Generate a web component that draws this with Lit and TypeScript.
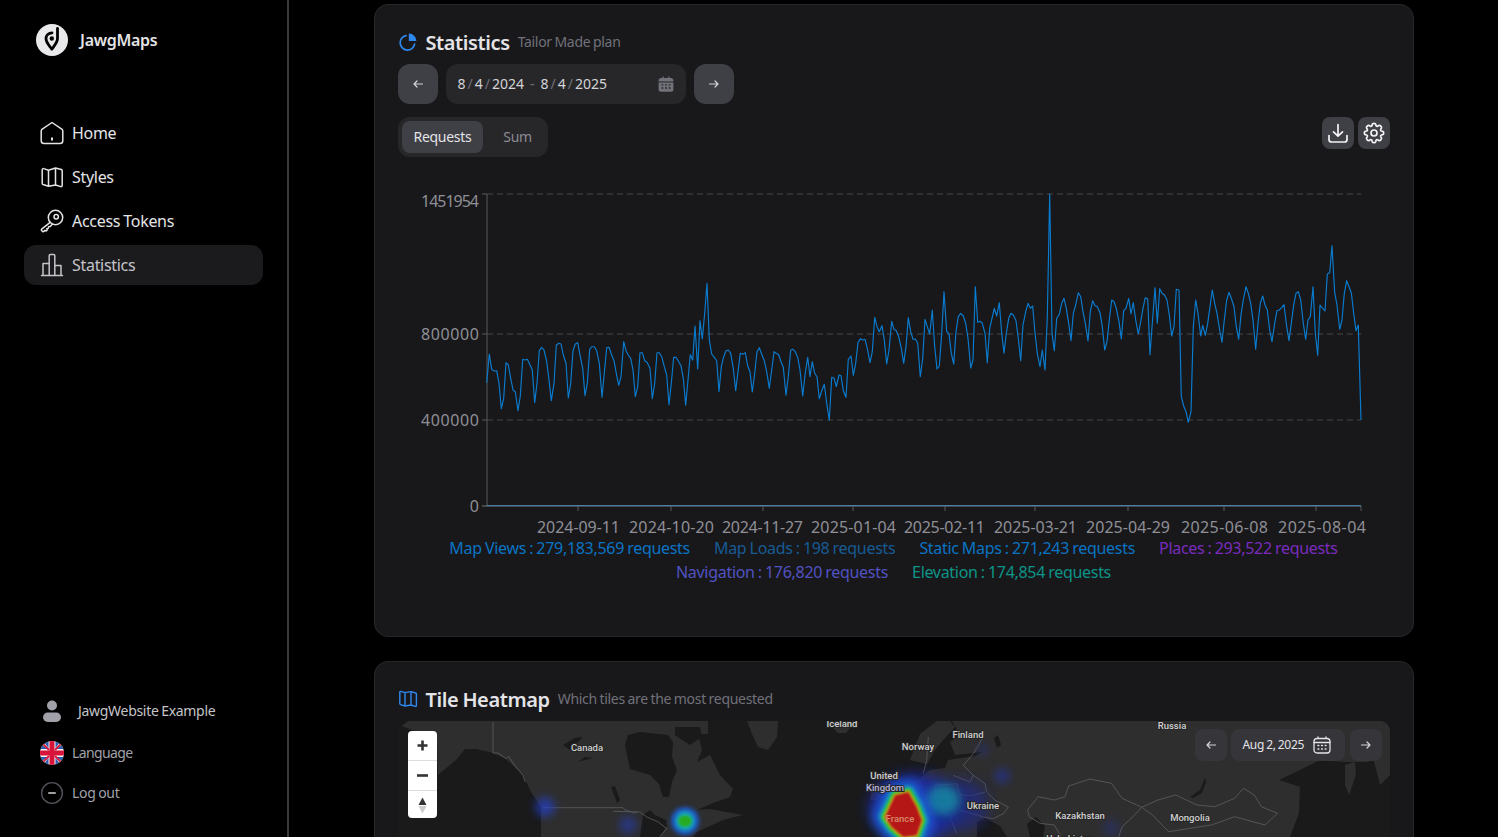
import { LitElement, html, svg, css } from "lit";
import { customElement } from "lit/decorators.js";

const z5: number[] = [20,368,28,282,35,328,42,333,50,332,57,370,64,446,71,415,78,308,85,314,92,355,99,390,106,395,114,452,121,408,128,298,135,300,142,298,150,314,157,330,164,428,171,370,178,272,185,262,192,270,200,305,207,360,214,422,222,370,229,256,236,250,243,252,250,285,258,310,265,414,272,370,279,272,286,252,293,248,300,285,308,325,315,407,322,370,329,268,336,260,343,260,350,272,358,310,366,412,373,340,380,263,387,262,394,282,402,302,409,340,416,376,423,350,431,245,438,272,445,285,452,295,459,330,466,410,473,380,480,278,487,278,494,302,501,307,510,325,517,416,524,370,531,278,538,278,545,290,553,320,560,345,567,434,574,370,581,292,588,292,595,303,603,317,610,355,617,436,624,360,631,284,638,300,645,198,653,327,660,182,667,237,674,160,681,70,688,240,695,282,703,292,710,303,717,395,724,320,731,290,738,272,745,270,752,280,760,325,767,392,774,335,781,280,788,283,796,278,803,318,810,335,817,396,824,340,831,275,838,263,845,283,853,302,860,335,868,385,875,330,882,275,889,280,896,284,903,305,910,322,918,406,925,350,932,270,939,268,946,275,953,292,960,330,968,408,975,345,983,292,990,350,997,305,1004,340,1011,350,1018,416,1026,390,1033,373,1040,430,1048,480,1055,352,1062,354,1069,380,1077,345,1083,347,1090,392,1098,412,1105,298,1113,288,1120,346,1127,310,1134,248,1141,236,1148,240,1155,238,1162,265,1170,308,1177,275,1184,172,1191,200,1198,215,1206,197,1213,240,1220,312,1227,270,1235,184,1242,208,1249,212,1256,230,1264,265,1271,310,1278,260,1285,173,1292,215,1299,238,1306,237,1313,250,1321,350,1328,295,1335,178,1342,200,1349,222,1357,150,1364,260,1371,327];
const z6: number[] = [28,528,35,430,42,305,50,425,57,432,64,490,71,522,78,425,85,380,92,370,100,378,107,400,114,445,122,534,129,510,136,290,143,397,150,394,157,400,165,430,172,518,179,415,186,385,193,355,200,378,208,338,215,430,222,490,229,430,236,385,243,370,250,375,258,392,265,445,272,512,279,405,287,365,294,340,301,355,308,348,315,430,322,490,330,530,337,480,345,540,352,380,359,12,366,430,373,482,380,385,388,373,395,340,402,325,409,355,416,400,423,452,430,370,437,345,445,308,452,320,459,365,466,400,474,453,481,365,488,332,495,347,502,350,510,368,517,410,524,480,531,455,538,390,545,330,552,335,559,355,567,395,574,447,581,362,588,355,596,325,603,372,610,338,617,390,625,432,632,395,639,355,646,323,653,326,660,494,667,400,675,293,682,400,689,296,696,310,704,316,711,330,718,375,725,438,732,410,739,298,747,300,754,620,761,648,768,665,775,697,783,665,790,410,797,330,804,370,812,438,818,406,826,436,833,400,840,350,847,300,854,340,861,370,869,420,876,457,883,390,890,330,897,307,904,325,912,350,919,410,926,448,933,375,940,330,948,290,955,310,962,340,969,390,977,478,984,400,991,340,998,318,1005,345,1012,360,1019,420,1026,455,1034,400,1041,362,1048,360,1055,353,1062,344,1070,410,1077,452,1084,400,1091,345,1098,310,1105,305,1112,330,1120,400,1127,448,1134,390,1141,380,1149,290,1156,430,1163,496,1170,345,1178,355,1185,363,1192,252,1199,248,1206,167,1214,308,1221,345,1229,418,1236,390,1243,310,1250,272,1257,290,1264,308,1271,370,1278,422,1285,405,1293,690];

const conv = (a: number[], x0: number, y0: number, fx = 3, fy = 3) => {
  const out: string[] = [];
  for (let i = 0; i < a.length; i += 2) out.push(`${(x0 + a[i] / fx).toFixed(1)},${(y0 + a[i + 1] / fy).toFixed(1)}`);
  return out.join(" ");
};
const linePts = conv(z5, 480, 260) + " " + conv(z6, 930, 190);

const Z8 = (a: number[]) => conv(a, 840, 700, 2.8, 3);
const Z10 = (a: number[]) => conv(a, 398, 717);
const Z11 = (a: number[]) => conv(a, 630, 717);
const Z12 = (a: number[]) => conv(a, 860, 717);

const ticks = [578, 671, 763, 853, 945, 1035, 1128, 1224, 1316, 1361];
const xLabels: [number, string, number][] = [[578.5, "2024-09-11", 83], [671.5, "2024-10-20", 85], [762.5, "2024-11-27", 81], [853.5, "2025-01-04", 85], [944.5, "2025-02-11", 81], [1035.5, "2025-03-21", 83], [1128, "2025-04-29", 84], [1224.5, "2025-06-08", 87], [1322, "2025-08-04", 88]];
const yLabels: [number, number, string, number][] = [[194, 201, "1451954", 58], [334, 334, "800000", 58], [420, 420, "400000", 58], [506, 506, "0", 9]];

const legend: [string, string][] = [
  ["Map Views : 279,183,569 requests", "l1"],
  ["Map Loads : 198 requests", "l2"],
  ["Static Maps : 271,243 requests", "l3"],
  ["Places : 293,522 requests", "l4"],
  ["Navigation : 176,820 requests", "l5"],
  ["Elevation : 174,854 requests", "l6"],
];

const mapLabels: [number, number, string, string][] = [
  [587, 751, "Canada", "ml"], [842, 727, "Iceland", "ml"], [918, 750, "Norway", "ml"], [968, 738, "Finland", "ml"],
  [884, 779, "United", "ml"], [885, 791, "Kingdom", "ml ml-h"], [900, 822, "France", "ml ml-f"], [983, 809, "Ukraine", "ml"],
  [1080, 819, "Kazakhstan", "ml"], [1172, 729, "Russia", "ml"], [1190, 821, "Mongolia", "ml"], [1070, 842, "Uzbekistan", "ml"],
];

const france = Z12([75,300,105,235,145,225,170,270,185,310,170,355,130,360,95,330]);

const arrowL = html`<svg class="ar" viewBox="0 0 12 12"><path d="M10.5 6H2M5 3 2 6l3 3" /></svg>`;
const arrowR = html`<svg class="ar" viewBox="0 0 12 12"><path d="M1.5 6H10M7 3l3 3-3 3" /></svg>`;

@customElement("app-root")
export class AppRoot extends LitElement {
  static styles = css`
    :host { display: flex; height: 837px; overflow: hidden; background: #000; font-family: "Noto Sans", sans-serif; color: #e4e4e7; letter-spacing: -0.3px; word-spacing: -0.7px; }
    * { box-sizing: border-box; }
    .t { margin-top: -2px; }
    .side { width: 289px; flex: none; height: 837px; border-right: 2px solid #3a3a3f; padding: 24px; display: flex; flex-direction: column; }
    .logo { display: flex; align-items: center; gap: 12px; padding-left: 12px; height: 32px; font-weight: 600; font-size: 16px; color: #e4e4e7; }
    .logo svg { width: 32px; height: 32px; }
    .nav { margin-top: 57px; display: flex; flex-direction: column; gap: 4px; flex: 1; }
    .item { height: 40px; display: flex; align-items: center; gap: 8px; padding-left: 16px; border-radius: 12px; font-size: 16px; color: #e4e4e7; }
    .item.on { background: #1b1b1e; color: #c4c4c9; }
    .item svg { width: 24px; height: 24px; fill: none; stroke: currentColor; stroke-width: 1.5; stroke-linecap: round; stroke-linejoin: round; flex: none; }
    .low { height: 40px; display: flex; align-items: center; padding-left: 16px; font-size: 14px; color: #a1a1aa; gap: 8px; }
    .low svg { width: 24px; height: 24px; flex: none; }
    .low.user { color: #c4c4c9; gap: 16px; padding-left: 19px; margin-bottom: 2px; }
    .low.user svg { width: 20px; height: 24px; margin-left: -1px; }
    .lang { letter-spacing: -0.6px; }
    .main { flex: 1; padding-top: 4px; display: flex; flex-direction: column; align-items: center; gap: 24px; min-width: 0; }
    .card { width: 1040px; flex: none; background: #18181b; border: 1px solid #27272a; border-radius: 14px; padding: 23px; }
    .c1 { height: 633px; }
    .c2 { height: 600px; }
    .title { height: 28px; display: flex; align-items: center; }
    .title svg { width: 20px; height: 20px; margin-right: 8px; flex: none; }
    .title b { font-size: 20px; font-weight: 600; color: #e4e4e7; margin-right: 8px; letter-spacing: -0.4px; }
    .title span { font-size: 14px; color: #71717a; }
    .title .t { margin-top: -1px; }
    .dates { display: flex; gap: 8px; margin-top: 8px; height: 40px; }
    .sq { width: 40px; height: 40px; border-radius: 12px; background: #3f3f46; display: flex; align-items: center; justify-content: center; }
    .ar { width: 12px; height: 12px; fill: none; stroke: #d4d4d8; stroke-width: 1.2; stroke-linecap: round; stroke-linejoin: round; }
    .range { width: 240px; height: 40px; border-radius: 12px; background: #27272a; display: flex; align-items: center; padding: 0 12px; font-size: 14px; color: #d4d4d8; letter-spacing: 0; }
    .range i { font-style: normal; color: #71717a; margin: 0 2px; }
    .range .dash { margin: 0 6px; }
    .range svg { width: 16px; height: 16px; margin-left: auto; fill: #71717a; }
    .bar { display: flex; justify-content: space-between; margin-top: 13px; }
    .tabs { display: flex; height: 40px; padding: 4px; border-radius: 12px; background: #27272a; font-size: 14px; color: #8b8b93; }
    .tab { height: 32px; display: flex; align-items: center; padding: 0 12px 2px; border-radius: 8px; }
    .tab.on { background: #3f3f46; color: #e4e4e7; }
    .tab.sum { padding: 0 12px 2px 20px; }
    .tools { display: flex; gap: 4px; }
    .tool { width: 32px; height: 32px; border-radius: 8px; background: #3f3f46; display: flex; align-items: center; justify-content: center; }
    .tool svg { width: 24px; height: 24px; fill: none; stroke: #f4f4f5; stroke-width: 1.7; stroke-linecap: round; stroke-linejoin: round; }
    .chart { display: block; width: 992px; height: 378px; margin-top: 4px; }
    .chart text { font-family: "Noto Sans", sans-serif; font-size: 16px; fill: #8f8f96; letter-spacing: 0; word-spacing: 0; }
    .grid { stroke: #47474a; stroke-width: 1; stroke-dasharray: 6 4; fill: none; }
    .axis { stroke: #58585c; stroke-width: 1; fill: none; }
    .series { fill: none; stroke: #0a7cd0; stroke-width: 1.15; stroke-linejoin: round; }
    .base { stroke: #4d7d9f; stroke-width: 1.2; }
    .legend { display: flex; flex-wrap: wrap; justify-content: center; column-gap: 24px; font-size: 16px; line-height: 24px; margin-top: -3px; }
    .l1 { color: #0a74c4; } .l2 { color: #175b94; } .l3 { color: #0a74c4; } .l4 { color: #7a2bbd; } .l5 { color: #5252c2; } .l6 { color: #0d9488; }
    .map { position: relative; margin-top: 8px; height: 400px; border-radius: 10px; overflow: hidden; background: #1a1a1b; }
    .map > svg.geo { display: block; width: 992px; height: 116px; }
    .land { fill: #2f2e2e; }
    .sea { fill: #1a1a1b; }
    .bd { fill: none; stroke: #5e5e5e; stroke-width: 0.8; stroke-linejoin: round; }
    .ml { font-family: Roboto, sans-serif; font-size: 9.5px; font-weight: 500; fill: #cfcfcf; stroke: #262626; stroke-width: 2px; paint-order: stroke; text-anchor: middle; letter-spacing: 0; word-spacing: 0; }
    .ml-h { fill: #b4b4dc; }
    .ml-f { fill: #d88a6a; stroke: none; }
    .zoom { position: absolute; left: 10px; top: 10px; width: 29px; height: 87px; background: #fff; border-radius: 4px; display: flex; flex-direction: column; }
    .zoom div { flex: 1; display: flex; align-items: center; justify-content: center; border-top: 1px solid #ddd; }
    .zoom div:first-child { border-top: none; }
    .zoom svg { width: 29px; height: 29px; }
    .mdate { position: absolute; right: 8px; top: 8px; display: flex; gap: 4px; height: 32px; }
    .mb { width: 32px; height: 32px; background: #35353a; border-radius: 8px; display: flex; align-items: center; justify-content: center; }
    .md { width: 114px; height: 32px; background: #35353a; border-radius: 8px; display: flex; align-items: center; padding-left: 12px; gap: 8px; font-size: 12px; color: #e4e4e7; }
    .md svg { width: 20px; height: 20px; fill: none; stroke: #e4e4e7; stroke-width: 1.3; stroke-linecap: round; stroke-linejoin: round; flex: none; }
    .md + .mb { margin-left: 1px; }
  `;

  chart() {
    return html`<svg class="chart" viewBox="398 161 992 378">
      ${[194, 334, 420].map((y) => svg`<line class="grid" x1="487" x2="1361" y1=${y} y2=${y}></line>`)}
      <line class="axis" x1="487" x2="487" y1="194" y2="506"></line>
      ${yLabels.map(([t, y, s, w]) => svg`<line class="axis" x1="482" x2="487" y1=${t} y2=${t}></line><text x="479" y=${y + 5.5} text-anchor="end" textLength=${w}>${s}</text>`)}
      <line class="axis" x1="482" x2="1361" y1="506" y2="506"></line>
      ${ticks.map((x) => svg`<line class="axis" x1=${x} x2=${x} y1="506" y2="511"></line>`)}
      ${xLabels.map(([x, s, w]) => svg`<text x=${x} y="533" text-anchor="middle" textLength=${w}>${s}</text>`)}
      <line class="base" x1="487" x2="1361" y1="505.6" y2="505.6"></line>
      <polyline class="series" points=${linePts}></polyline>
    </svg>`;
  }

  mapSvg() {
    return html`<svg class="geo" viewBox="398 721 992 116">
      <defs>
        <filter id="b1" x="-50%" y="-50%" width="200%" height="200%"><feGaussianBlur stdDeviation="1"></feGaussianBlur></filter>
        <filter id="b2" x="-50%" y="-50%" width="200%" height="200%"><feGaussianBlur stdDeviation="2.2"></feGaussianBlur></filter>
        <filter id="b4" x="-50%" y="-50%" width="200%" height="200%"><feGaussianBlur stdDeviation="4"></feGaussianBlur></filter>
        <filter id="b7" x="-50%" y="-50%" width="200%" height="200%"><feGaussianBlur stdDeviation="7"></feGaussianBlur></filter>
      </defs>
      <polygon class="land" points="402,726 408,721 708,721 708,734 698,734 702,750 697,762 710,755 720,775 733,789 730,797 713,803 697,810 710,809 743,815 723,820 697,832 693,837 541,837 541,807 531,792 523,775 506,759 493,753 476,749 465,749 456,760 438,775 437,740"></polygon>
      <polygon class="sea" points="625,745 630,769 650,775 659,784 663,797 669,797 672,782 677,770 672,757 673,742 668,735 640,732 628,735"></polygon>
      <polygon class="sea" points="675,727 700,727 702,737 690,745 675,735"></polygon>
      <polygon class="sea" points="563,745 575,738 583,737 576,744 570,750"></polygon>
      <polygon class="sea" points="578,762 585,757 593,758 585,760"></polygon>
      <polygon class="sea" points="611,787 615,786 620,800 617,803"></polygon>
      <polygon class="sea" points="643,815 650,810 655,815 666,820 667,826 660,837 640,837"></polygon>
      <polygon class="land" points="747,721 778,721 777,737 768,750 758,747 752,734"></polygon>
      <polygon class="land" points="833,728 850,728 846,733 838,733"></polygon>
      <polygon class="land" points="872,790 878,783 884,787 878,800 870,800"></polygon>
      <polygon class="land" points="937,721 920,734 910,760 927,764 935,750 945,738 955,727 950,721"></polygon>
      <polygon class="land" points="952,721 1390,721 1390,745 1368,762 1345,762 1320,760 1300,770 1279,780 1300,787 1299,813 1290,837 905,837 900,815 905,790 930,770 945,768 948,760 975,756 982,752 955,755 950,742 960,735"></polygon>
      <polygon class="land" points="1345,765 1355,762 1356,775 1349,795 1345,785"></polygon>
      <polygon class="land" points="1368,740 1390,725 1390,775 1380,785 1375,765"></polygon>
      <polygon class="sea" points="977,822 985,818 1000,826 1007,837 977,837"></polygon>
      <polygon class="sea" points="1027,824 1036,817 1045,826 1043,837 1030,837"></polygon>
      <polygon class="sea" points="1190,797 1200,790 1205,778 1206,782 1202,793 1193,798"></polygon>
      <polygon class="sea" points="994,738 998,735 1001,745 997,748"></polygon>
      <polyline class="bd" points=${Z10([285,15,285,108,300,108,325,125,332,118,350,145,375,175,382,195])}></polyline>
      <polyline class="bd" points=${Z10([435,272,675,272,680,278,710,288,718,285])}></polyline>
      <polyline class="bd" points=${Z11([-50,283,30,285,50,300,85,315,110,335,90,358])}></polyline>
      <polyline class="bd" points=${Z8([525,330,555,290,600,300,630,290,640,258,700,237,760,250,790,295,845,322,820,350,790,380,780,411])}></polyline>
      <polyline class="bd" points=${Z8([525,330,530,350,560,370,600,375,620,411])}></polyline>
      <polyline class="bd" points=${Z8([845,322,890,300,940,285,1000,315,1050,320,1105,295,1130,265,1160,285,1180,320,1225,340,1190,375,1105,350,1040,375,920,395,875,345,845,322])}></polyline>
      <polyline class="bd" points=${Z12([205,60,200,130,190,170])}></polyline>
      <polyline class="bd" points=${Z12([370,60,340,110,310,145,340,175,375,200,380,225,405,250,445,270,430,290,400,305,370,300,340,290,300,280,270,300])}></polyline>
      <polyline class="bd" points=${Z12([280,175,330,195,340,175])}></polyline>
      <polyline class="bd" points=${Z12([225,205,290,200,300,230,310,235,340,235,375,225])}></polyline>
      <polyline class="bd" points=${Z12([225,205,230,260,205,265,210,290,250,285,270,300,290,350])}></polyline>

      <g filter="url(#b7)" opacity="0.85">
        <ellipse cx="915" cy="808" rx="46" ry="34" fill="#1a2cb0"></ellipse>
        <ellipse cx="960" cy="805" rx="28" ry="26" fill="#1a2a9a" opacity="0.7"></ellipse>
      </g>
      <circle cx="983" cy="750" r="6" fill="#2030a0" opacity="0.4" filter="url(#b4)"></circle>
      <circle cx="1002" cy="776" r="8" fill="#2235a8" opacity="0.55" filter="url(#b4)"></circle>
      <circle cx="1111" cy="828" r="9" fill="#2235a8" opacity="0.3" filter="url(#b4)"></circle>
      <ellipse cx="943" cy="800" rx="17" ry="15" fill="#159aa4" opacity="0.7" filter="url(#b4)"></ellipse>
      <polygon points=${france} fill="#1c5cd8" stroke="#1c5cd8" stroke-width="26" stroke-linejoin="round" opacity="0.8" filter="url(#b4)"></polygon>
      <polygon points=${france} fill="#18b0b0" stroke="#18b0b0" stroke-width="12" stroke-linejoin="round" filter="url(#b2)"></polygon>
      <polygon points=${france} fill="#34c028" stroke="#34c028" stroke-width="7" stroke-linejoin="round" filter="url(#b1)"></polygon>
      <polygon points=${france} fill="#c8b820" stroke="#c8b820" stroke-width="3" stroke-linejoin="round" filter="url(#b1)"></polygon>
      <polygon points=${france} fill="#b51414" filter="url(#b1)"></polygon>

      <circle cx="545" cy="807" r="10" fill="#2340c8" opacity="0.7" filter="url(#b4)"></circle>
      <circle cx="628" cy="825" r="9" fill="#2340c8" opacity="0.5" filter="url(#b4)"></circle>
      <circle cx="685" cy="821" r="14" fill="#1c5cd8" opacity="0.9" filter="url(#b2)"></circle>
      <circle cx="685" cy="821" r="9.5" fill="#18b0b0" filter="url(#b2)"></circle>
      <ellipse cx="685" cy="821" rx="6.5" ry="5.5" fill="#26ac20" filter="url(#b1)"></ellipse>
      ${mapLabels.map(([x, y, s, c]) => svg`<text class=${c} x=${x} y=${y}>${s}</text>`)}
    </svg>`;
  }

  render() {
    return html`
      <aside class="side">
        <div class="logo">
          <svg viewBox="0 0 32 32"><circle cx="16" cy="16" r="16" fill="#e9e9eb"></circle><path d="M21.5 4.5V14.5C21.5 18.5 18 22 15.8 25.2 13.5 22 10 18.5 10 14.5 10 11.2 12.7 9 16 8.8" fill="none" stroke="#000" stroke-width="2.8" stroke-linecap="round" stroke-linejoin="round"></path><circle cx="15.8" cy="14.5" r="2.2" fill="#000"></circle></svg>
          <span>JawgMaps</span>
        </div>
        <nav class="nav">
          <div class="item">
            <svg viewBox="0 0 24 24"><path d="M12 1.5 21.8 8.2C22.4 8.6 22.8 9.3 22.8 10V19.8C22.8 21.4 21.6 22.6 20 22.6H4C2.4 22.6 1.2 21.4 1.2 19.8V10C1.2 9.3 1.6 8.6 2.2 8.2Z"></path><path d="M12 17.2V18.8" stroke-width="2"></path></svg>
            Home
          </div>
          <div class="item">
            <svg viewBox="0 0 24 24"><path d="M8.5 5.2 3.8 3.6C3 3.3 2.2 3.9 2.2 4.7V18.2C2.2 18.8 2.6 19.3 3.1 19.5L8.5 21.2 15.5 20 20.9 21.6C21.6 21.8 22.2 21.3 22.2 20.6V5.8C22.2 5.2 21.8 4.7 21.3 4.5L15.5 3ZM8.5 5.2V21.2M15.5 3V20"></path></svg>
            Styles
          </div>
          <div class="item">
            <svg viewBox="0 0 24 24"><circle cx="15.5" cy="8.5" r="7.2"></circle><circle cx="16.2" cy="7.8" r="2.2"></circle><path d="M10.2 13.4 1.6 20.2C1.2 20.6 1.2 21 1.5 21.5L2.6 22.4C3 22.8 3.5 22.7 3.9 22.4L5 21.3 6.2 22 7.2 21 6.8 19.7 8.2 19.4 8.6 17.8 10 17.6 12.4 15.2"></path></svg>
            Access Tokens
          </div>
          <div class="item on">
            <svg viewBox="0 0 24 24"><path d="M1.5 22.5H22.5M3 22.5V10.5H9.2M9.2 22.5V2.8C9.2 2.2 9.7 1.6 10.3 1.6H13.7C14.3 1.6 14.8 2.2 14.8 2.8V22.5M14.8 12.5H21V22.5"></path></svg>
            Statistics
          </div>
        </nav>
        <div class="low user">
          <svg viewBox="0 0 20 24"><circle cx="10" cy="6.5" r="5" fill="#a1a1aa"></circle><rect x="1" y="13.5" width="18" height="9.5" rx="4.7" fill="#a1a1aa"></rect></svg>
          <span class="t">JawgWebsite Example</span>
        </div>
        <div class="low">
          <svg viewBox="0 0 24 24">
            <defs><clipPath id="fl"><circle cx="12" cy="12" r="12"></circle></clipPath></defs>
            <g clip-path="url(#fl)">
              <rect width="24" height="24" fill="#f5f5f5"></rect>
              <path d="M0 3 8 8H0ZM3 0 8.5 7V0ZM15.5 0V7L21 0ZM24 3 16 8H24ZM0 21 8 16H0ZM3 24 8.5 17V24ZM15.5 24V17L21 24ZM24 21 16 16H24Z" fill="#2a5caa"></path>
              <path d="M0 0 9 9M24 0 15 9M0 24 9 15M24 24 15 15" stroke="#d8143a" stroke-width="1.8"></path>
              <path d="M12 0V24M0 12H24" stroke="#d8143a" stroke-width="5"></path>
            </g>
          </svg>
          <span class="t lang">Language</span>
        </div>
        <div class="low">
          <svg viewBox="0 0 24 24"><circle cx="12" cy="12" r="10.4" fill="none" stroke="#52525b" stroke-width="1.4"></circle><path d="M8.8 12H15.2" stroke="#d4d4d8" stroke-width="1.6" stroke-linecap="round"></path></svg>
          <span class="t">Log out</span>
        </div>
      </aside>
      <main class="main">
        <section class="card c1">
          <div class="title">
            <svg viewBox="0 0 20 20"><path d="M8 3.6A7.3 7.3 0 1 0 16.6 12.2" fill="none" stroke="#2f88ee" stroke-width="1.7" stroke-linecap="round"></path><path d="M10.8 1.4A7.6 7.6 0 0 1 18.4 9H10.8Z" fill="#2f88ee"></path></svg>
            <b>Statistics</b><span class="t">Tailor Made plan</span>
          </div>
          <div class="dates">
            <div class="sq">${arrowL}</div>
            <div class="range">
              <span class="t">8<i>/</i>4<i>/</i>2024<i class="dash">-</i>8<i>/</i>4<i>/</i>2025</span>
              <svg viewBox="0 0 16 16"><path d="M4.5 0.5H5.8V2H10.2V0.5H11.5V2H13C14.4 2 15.4 3 15.4 4.3V5.5H0.6V4.3C0.6 3 1.6 2 3 2H4.5ZM0.6 6.6H15.4V13.4C15.4 14.7 14.4 15.7 13 15.7H3C1.6 15.7 0.6 14.7 0.6 13.4ZM3.5 8.2V9.6H5.3V8.2ZM7.1 8.2V9.6H8.9V8.2ZM10.7 8.2V9.6H12.5V8.2ZM3.5 11.3V12.7H5.3V11.3ZM7.1 11.3V12.7H8.9V11.3ZM10.7 11.3V12.7H12.5V11.3Z" fill-rule="evenodd"></path></svg>
            </div>
            <div class="sq">${arrowR}</div>
          </div>
          <div class="bar">
            <div class="tabs"><div class="tab on">Requests</div><div class="tab sum">Sum</div></div>
            <div class="tools">
              <div class="tool"><svg viewBox="0 0 24 24"><path d="M12 3.5V15M7.5 10.8 12 15.2 16.5 10.8M3 14.5V18.5C3 19.9 4.1 21 5.5 21H18.5C19.9 21 21 19.9 21 18.5V14.5"></path></svg></div>
              <div class="tool"><svg viewBox="0 0 24 24"><circle cx="12" cy="12" r="3"></circle><path d="M10.3 3.3C10.7 2 13.3 2 13.7 3.3L14 4.6C14.2 5.3 15 5.6 15.6 5.3L16.8 4.6C18 3.9 20.1 6 19.4 7.2L18.7 8.4C18.4 9 18.7 9.8 19.4 10L20.7 10.3C22 10.7 22 13.3 20.7 13.7L19.4 14C18.7 14.2 18.4 15 18.7 15.6L19.4 16.8C20.1 18 18 20.1 16.8 19.4L15.6 18.7C15 18.4 14.2 18.7 14 19.4L13.7 20.7C13.3 22 10.7 22 10.3 20.7L10 19.4C9.8 18.7 9 18.4 8.4 18.7L7.2 19.4C6 20.1 3.9 18 4.6 16.8L5.3 15.6C5.6 15 5.3 14.2 4.6 14L3.3 13.7C2 13.3 2 10.7 3.3 10.3L4.6 10C5.3 9.8 5.6 9 5.3 8.4L4.6 7.2C3.9 6 6 3.9 7.2 4.6L8.4 5.3C9 5.6 9.8 5.3 10 4.6Z"></path></svg></div>
            </div>
          </div>
          ${this.chart()}
          <div class="legend">${legend.map(([t, c]) => html`<span class=${c}>${t}</span>`)}</div>
        </section>
        <section class="card c2">
          <div class="title">
            <svg viewBox="0 0 20 20"><path d="M7 3.6 2.8 2.4C2.2 2.2 1.8 2.6 1.8 3.2V14.6C1.8 15.1 2.1 15.5 2.5 15.6L7 17 13 16 17.4 17.4C18 17.6 18.4 17.2 18.4 16.6V5C18.4 4.5 18.1 4.1 17.6 4L13 2.6ZM7 3.6V17M13 2.6V16" fill="none" stroke="#2f88ee" stroke-width="1.4" stroke-linejoin="round"></path></svg>
            <b>Tile Heatmap</b><span class="t">Which tiles are the most requested</span>
          </div>
          <div class="map">
            ${this.mapSvg()}
            <div class="zoom">
              <div><svg viewBox="0 0 29 29"><path d="M14.5 9.5V19.5M9.5 14.5H19.5" stroke="#333" stroke-width="2.6"></path></svg></div>
              <div><svg viewBox="0 0 29 29"><path d="M9 14.5H20" stroke="#333" stroke-width="2.6"></path></svg></div>
              <div><svg viewBox="0 0 29 29"><path d="M14.5 6.5 18.5 14H10.5Z" fill="#333"></path><path d="M14.5 22.5 18.5 15H10.5Z" fill="#ccc"></path></svg></div>
            </div>
            <div class="mdate">
              <div class="mb">${arrowL}</div>
              <div class="md"><span class="t">Aug 2, 2025</span>
                <svg viewBox="0 0 20 20"><rect x="2" y="3.5" width="16" height="14.5" rx="3"></rect><path d="M2 7.5H18M6 1.8V3.5M14 1.8V3.5"></path><path d="M6 10.5H6.8M9.6 10.5H10.4M13.2 10.5H14M6 14H6.8M9.6 14H10.4M13.2 14H14" stroke-width="1.5"></path></svg>
              </div>
              <div class="mb">${arrowR}</div>
            </div>
          </div>
        </section>
      </main>
    `;
  }
}
